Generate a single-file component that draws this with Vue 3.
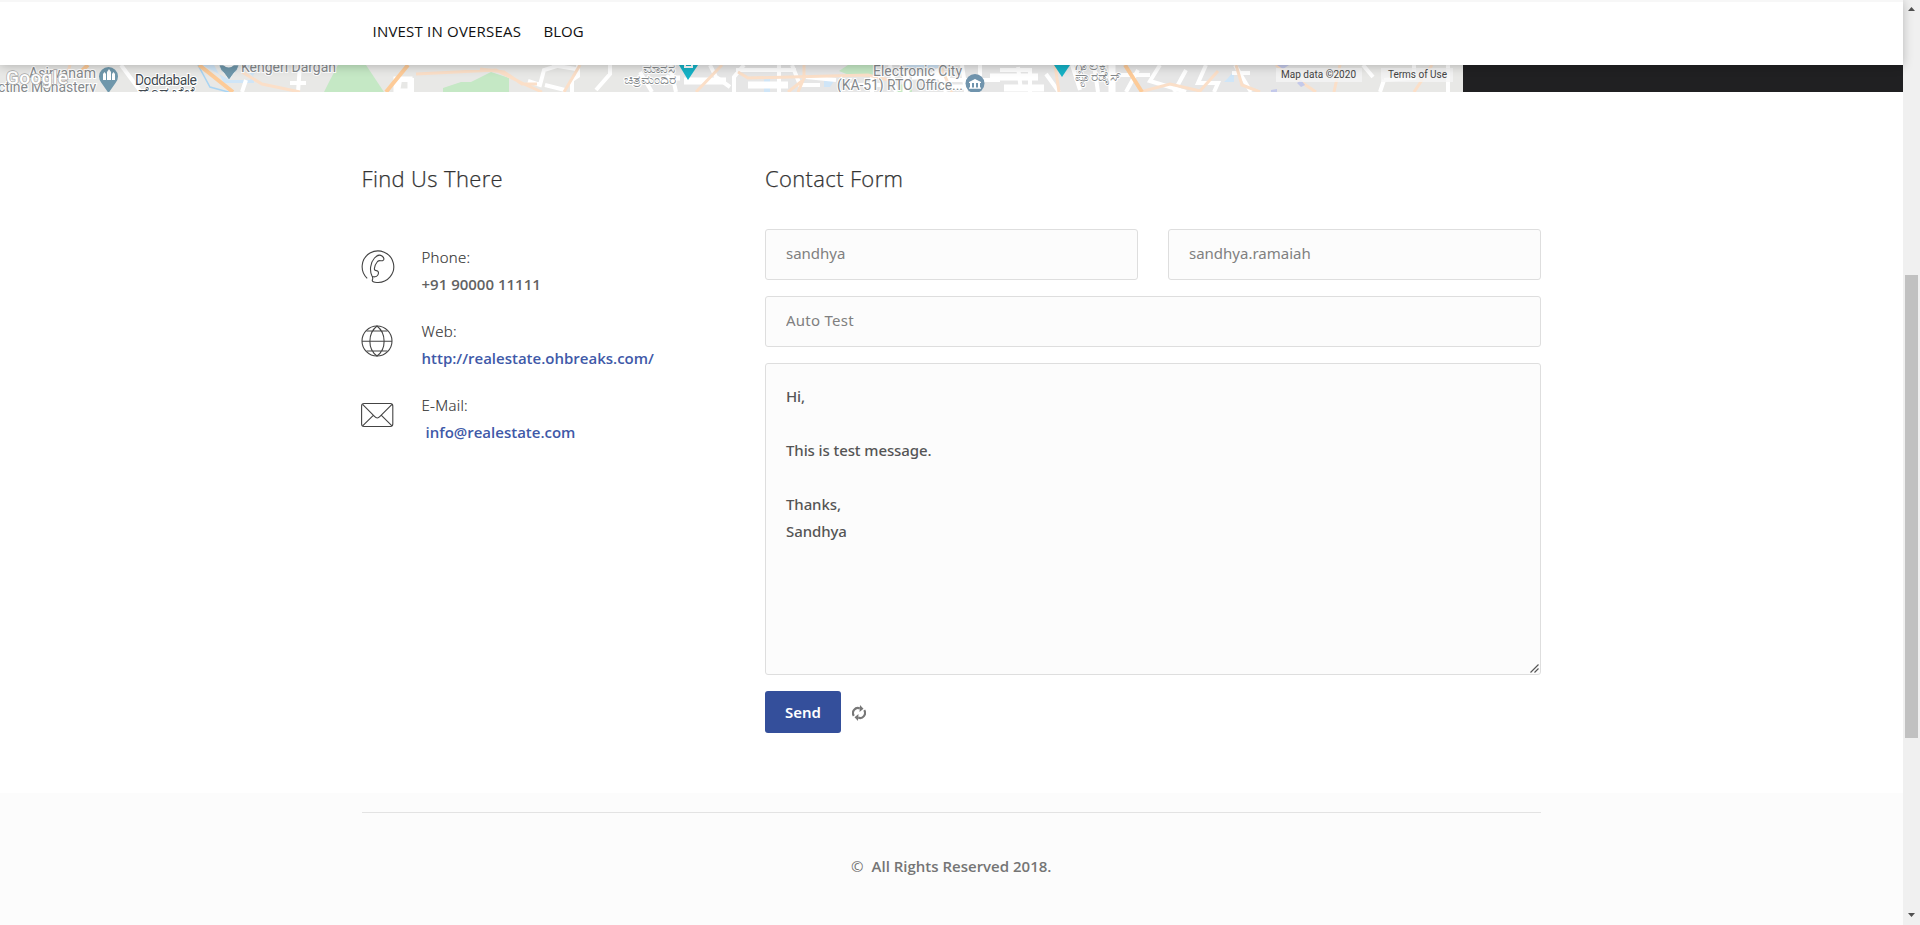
<script setup>
import { ref } from 'vue'

const name = ref('sandhya')
const email = ref('sandhya.ramaiah')
const subject = ref('Auto Test')
const message = ref('Hi,\n\nThis is test message.\n\nThanks,\nSandhya')
</script>

<template>
  <div class="window">
    <div class="page">
      <header class="nav">
        <a class="nav-link overseas">INVEST IN OVERSEAS</a>
        <a class="nav-link blog">BLOG</a>
      </header>

      <section class="map-row">
        <svg class="map" width="1463" height="27" viewBox="0 0 1463 27">
          <rect width="1463" height="27" fill="#e8e8e6" />
          <rect x="640" width="680" height="27" fill="#e6e6e6" />
          <g fill="#c5e8c5">
            <path d="M338 0h28l18 27h-60l6-12z" />
            <path d="M443 27v-4l18-6h10l20-10 18 6v14z" />
            <path d="M848 0h25v12l-24-2-10-4zM900 20l12-4v11h-16z" />
          </g>
          <g fill="#cfe5f7">
            <path d="M202 0h12l10 18h30v-6l-14-12h20l-10 15h-20zM764 14h6v13h-6zM824 16h10l-4 6h-6zM1228 13l6-7v11h-10zM906 0h32v3h-32z" />
          </g>
          <path d="M198 0l12 22 22 6" fill="none" stroke="#a8d4f3" stroke-width="1.5" />
          <g fill="none" stroke="#fff" stroke-width="4">
            <path d="M121 0l20 27M242 27l4-12M300 0l-2 27M290 18h16M398 27l2-12h12v12M528 16l12 4 4-15 16-5M545 20l20 5M572 27v-12l6-4v-11M552 0l24 4M610 0v9l-14 16M640 7l12 20M670 0l6 27M710 0l6 12 14 10M744 0l-10 12v15M736 5h60M779 0v27M792 0l8 20h20M806 12l30 3M850 20h32M872 10v17M890 0l6 27M936 4l10 23M962 0l4 27M940 15h60M980 0v25M1000 5h30v22M1018 2l3 23M1046 9l13 18M1072 0l8 25M1094 0l4 27M1110 10h40M1138 5l-12 22M1160 0l-10 16 36 11M1186 5l-12 22M1206 0l-8 18h20l-4 9M1235 0l16 27M1232 8h18M1363 0l10 12M1384 15l30-2v-13M1380 27l4-12M1448 0v27" />
            <path d="M662 18l8-6M684 16h42M748 20h40M906 6v21M912 11h38M990 12h48M1004 23h40M1112 0v27" stroke-width="7" />
            <path d="M396 14h14v12h-14zM668 13h12M952 22h12" stroke-width="5" />
          </g>
          <g fill="none" stroke="#fbdfc8" stroke-width="3">
            <path d="M70 0l-8 27M242 7l20 12 38 8M416 9l80-4 28 14 18 8M480 4l24 3 18 12h15M580 0l-16 27M722 0l-26 27M738 7l10 6 120-3 20 5M804 0v13l-6 14M802 16l-14 11M940 0l12 27M1055 0l4 27M1140 27l30-8 30 7 18-20M1236 0l6 20 18 7M1276 0l40 27M1340 0l-6 27M1432 0l-18 27" />
          </g>
          <g fill="none" stroke="#fdcb98" stroke-width="4">
            <path d="M88 0l-13 12M199 0l34 27M408 0l-22 27M1125 0l17 27" />
          </g>
          <g fill="#c4c9ea">
            <path d="M1277 0l6 4 6-4zM1297 18l4-3 4 5-4 2zM1271 25l6-1v3h-6z" />
          </g>
          <g class="poi">
            <text x="29" y="13" textLength="67">Asirvanam</text>
            <text x="-2" y="27" textLength="98">ctine Monastery</text>
            <text x="241" y="7" textLength="95">Kengeri Dargah</text>
            <text x="873" y="10.500" textLength="89">Electronic City</text>
            <text x="837" y="24.500" textLength="126">(KA-51) RTO Office...</text>
            <text x="643" y="8" textLength="32" lengthAdjust="spacingAndGlyphs" class="local">ಮಾನಸ</text>
            <text x="624" y="19" textLength="52" lengthAdjust="spacingAndGlyphs" class="local">ಚಿತ್ರಮಂದಿರ</text>
            <text x="1075" y="5" textLength="32" lengthAdjust="spacingAndGlyphs" class="local">ಗ್ಯಾಲಕ್ಸಿ</text>
            <text x="1075" y="16" textLength="46" lengthAdjust="spacingAndGlyphs" class="local">ಪ್ಯಾರಡೈಸ್</text>
          </g>
          <text x="135" y="20" textLength="62" class="town">Doddabale</text>
          <text x="138" y="32" textLength="57" lengthAdjust="spacingAndGlyphs" class="town">ದೊಡ್ಡಬೆಲೆ</text>
          <text x="6" y="18.500" textLength="62" class="google">Google</text>
          <g>
            <path d="M88.500 28l-7-10a9.500 9.500 0 1 1 14 0z" transform="translate(20 0)" fill="#6f97ab" />
            <path d="M103 15V9l1.500-2L106 9v6h1V7l2-3 2 3v8h1V9l1.500-2L115 9v6z" fill="#fff" />
            <path d="M219 0h20q-1 5-5 8l-5 7-5-7q-4-3-5-8z" fill="#6f97ab" stroke="#fff" stroke-width=".6" />
            <path d="M223 0h11q-5 5-11 0z" fill="#fff" />
            <path d="M679 0h19l-10 15z" fill="#15b2c6" />
            <path d="M684 0h2v1h5V0h2v3h-9z" fill="#fff" />
            <path d="M1054 0h16l-8 12z" fill="#15b2c6" />
            <circle cx="975" cy="18.500" r="9.500" fill="#7094ad" />
            <path d="M969 17l6-3 6 3v1h-12zM970 18h2v5h-2zM974 18h2v5h-2zM978 18h2v5h-2zM969 22.500h12v1.200h-12z" fill="#fff" />
          </g>
          <rect x="1276" y="3" width="86" height="14" fill="#f5f5f5" opacity=".75" />
          <rect x="1381" y="3" width="72" height="14" fill="#f5f5f5" opacity=".75" />
          <text x="1281" y="13" textLength="75" class="legal">Map data ©2020</text>
          <text x="1388" y="13" textLength="59" class="legal">Terms of Use</text>
        </svg>
      </section>

      <main class="contact">
        <section class="find">
          <h2>Find Us There</h2>
          <div class="info">
            <svg class="icon" viewBox="0 0 34 34">
              <g transform="translate(-1 0)">
                <path d="M7.200 28.300A15.800 15.800 0 1 1 17 32.500C14 32.500 11.500 31.500 12.500 29.500C13.300 28 12 27 12.500 26" />
                <path d="M12 26C9.500 21 10 13 14.500 8C17 5.200 20 4.500 22 6C24.500 8 24.500 10 22.500 10.700C20.500 11.300 19.800 9.500 17.500 11.500C15.500 14 14 17 14.500 19.500C15 21.500 17.500 19.800 18.300 22C19 24.500 17 26.500 15 26.800C13.700 27 12.500 26.700 12 26Z" />
              </g>
            </svg>
            <div class="lines"><span>Phone:</span><strong>+91 90000 11111</strong></div>
          </div>
          <div class="info">
            <svg class="icon" viewBox="0 0 34 34">
              <circle cx="16" cy="17" r="15" />
              <path d="M1 17.200h30M5.500 7h21M5.500 27h21M16 2C6.500 9.500 6.500 25 16 32C25.500 25 25.500 9.500 16 2Z" />
            </svg>
            <div class="lines"><span>Web:</span><a>http://realestate.ohbreaks.com/</a></div>
          </div>
          <div class="info">
            <svg class="icon" viewBox="0 0 34 34">
              <rect x=".6" y="5.500" width="31.200" height="23" rx="2.500" />
              <path d="M1.600 6.300L13.500 18.400Q16.200 21.500 19 18.400L31 6.300M1.600 27.800L12.300 17.300M31 27.800L20.400 17.300" />
            </svg>
            <div class="lines"><span>E-Mail:</span><a class="mail">info@realestate.com</a></div>
          </div>
        </section>

        <form class="form" @submit.prevent>
          <h2>Contact Form</h2>
          <div class="pair">
            <input v-model="name" class="field name" type="text">
            <input v-model="email" class="field email" type="text">
          </div>
          <input v-model="subject" class="field subject" type="text">
          <div class="message-box">
            <textarea v-model="message" class="field message" spellcheck="false"></textarea>
            <svg class="grip" width="9" height="9" viewBox="0 0 9 9">
              <path d="M.5 8.500l8-8M4.500 8.500l4-4" fill="none" stroke="#555" stroke-width="1.100" />
            </svg>
          </div>
          <div class="actions">
            <button class="send">Send</button>
            <svg class="refresh" width="14" height="16" viewBox="0 0 14 16">
              <path d="M1.800 10.800A5 5 0 0 1 7.800 3.400M12.200 5.200A5 5 0 0 1 6.200 12.600" fill="none" stroke="#777" stroke-width="2.200" />
              <path d="M8 0l3.500 3.800L7.500 7zM6 16l-3.500-3.800 4-3.200z" fill="#777" />
            </svg>
          </div>
        </form>
      </main>

      <footer class="footer">
        <div class="footer-inner"><span class="copy">©</span><span class="rights">All Rights Reserved 2018.</span></div>
      </footer>
    </div>

    <aside class="scrollbar">
      <svg width="7" height="4" viewBox="0 0 7 4"><path d="M3.500 0L7 4H0z" /></svg>
      <div class="track"><div class="thumb"></div></div>
      <svg width="7" height="4" viewBox="0 0 7 4"><path d="M3.500 4L7 0H0z" /></svg>
    </aside>
  </div>
</template>

<style>
body {
  margin: 0;
  overflow: hidden;
}
</style>

<style scoped>
* {
  box-sizing: border-box;
}
.window {
  display: flex;
  width: 1920px;
  height: 925px;
  overflow: hidden;
  font-family: "Open Sans", "Noto Sans", sans-serif;
  font-size: 15px;
  color: #555;
  background: #fff;
}
.page {
  width: 1903px;
  display: flex;
  flex-direction: column;
}
.nav {
  position: relative;
  z-index: 1;
  display: flex;
  gap: 22px;
  height: 65px;
  padding: 17px 0 0 372.5px;
  border-top: 2px solid #f7f7f7;
  background: #fff;
  box-shadow: 0 1px 10px rgba(0, 0, 0, .24);
}
.nav-link {
  font-size: 15px;
  line-height: 24px;
  font-weight: 500;
  color: #111;
  white-space: nowrap;
}
.overseas {
  width: 149px;
  letter-spacing: .2px;
}
.map-row {
  height: 27px;
  background: #202022;
}
.map {
  display: block;
}
.poi text {
  font: 14px Roboto, "Noto Sans", sans-serif;
  fill: #85898c;
  stroke: #fff;
  stroke-width: 2px;
  paint-order: stroke;
}
.poi .local {
  font-size: 12px;
}
.town {
  font: 14px Roboto, "Noto Sans", sans-serif;
  fill: #414950;
  stroke: #fff;
  stroke-width: 2px;
  paint-order: stroke;
}
.google {
  font: 500 19px Roboto, sans-serif;
  fill: #fff;
  stroke: #aaa;
  stroke-width: 1.4px;
  paint-order: stroke;
}
.legal {
  font: 10px Roboto, sans-serif;
  fill: #444;
}
.contact {
  display: flex;
  width: 1180px;
  height: 701px;
  margin: 0 auto;
}
.find {
  width: 403.5px;
}
h2 {
  margin: 0;
  padding-top: 70px;
  height: 137px;
  font-size: 22px;
  line-height: 32px;
  font-weight: 300;
  letter-spacing: .36px;
  color: #333;
  -webkit-text-stroke: .25px #333;
}
.info {
  display: flex;
  height: 74px;
  gap: 26px;
}
.find h2 {
  height: 152px;
}
.icon {
  width: 34px;
  height: 34px;
  margin: 6px .5px 0 -.5px;
  fill: none;
  stroke: #444;
  stroke-width: 1.1;
}
.lines {
  display: flex;
  flex-direction: column;
  line-height: 27px;
  white-space: nowrap;
}
.lines span {
  color: #333;
  font-weight: 300;
  letter-spacing: .3px;
  -webkit-text-stroke: .2px #333;
}
.lines strong,
.lines a {
  font-weight: 600;
}
.lines strong {
  color: #626262;
}
.lines a {
  color: #4059a8;
}
.lines .mail {
  padding-left: 4px;
}
.form {
  width: 776px;
  display: flex;
  flex-direction: column;
}
.pair {
  display: grid;
  grid-template-columns: 1fr 1fr;
  gap: 30px;
  margin-bottom: 16px;
}
.field {
  display: block;
  width: 100%;
  height: 51px;
  padding: 0 20px 3px;
  border: 1px solid #dedede;
  border-radius: 3px;
  outline: none;
  background: #fcfcfc;
  font: 400 15px "Noto Sans", sans-serif;
  color: #808080;
}
.subject {
  margin-bottom: 16px;
  letter-spacing: .25px;
}
.message-box {
  position: relative;
}
.message {
  height: 312px;
  padding: 19px 20px;
  line-height: 27px;
  font-weight: 500;
  letter-spacing: -.1px;
  color: #555;
  resize: none;
}
.grip {
  position: absolute;
  right: 2px;
  bottom: 2px;
}
.actions {
  display: flex;
  align-items: center;
  gap: 11px;
  margin-top: 16px;
}
.send {
  width: 76px;
  height: 42px;
  padding: 0;
  border: 0;
  border-radius: 3px;
  background: #344f9b;
  color: #fff;
  font: 600 15px "Noto Sans", sans-serif;
}
.refresh {
  margin-top: 2px;
}
.footer {
  height: 132px;
  padding: 19px 362px 0 361.5px;
  background: #fcfcfc;
}
.footer-inner {
  display: flex;
  justify-content: center;
  gap: 8px;
  padding-top: 40px;
  border-top: 1px solid #e3e3e3;
  line-height: 27px;
  font-weight: 600;
  color: #757575;
}
.copy {
  font-weight: 400;
}
.scrollbar {
  width: 17px;
  padding: 7px 0 8px;
  display: flex;
  flex-direction: column;
  align-items: center;
  background: #f0f0f0;
  fill: #505050;
}
.track {
  flex: 1;
  padding-top: 264px;
}
.thumb {
  width: 13px;
  height: 463px;
  background: #c1c1c1;
}
</style>
